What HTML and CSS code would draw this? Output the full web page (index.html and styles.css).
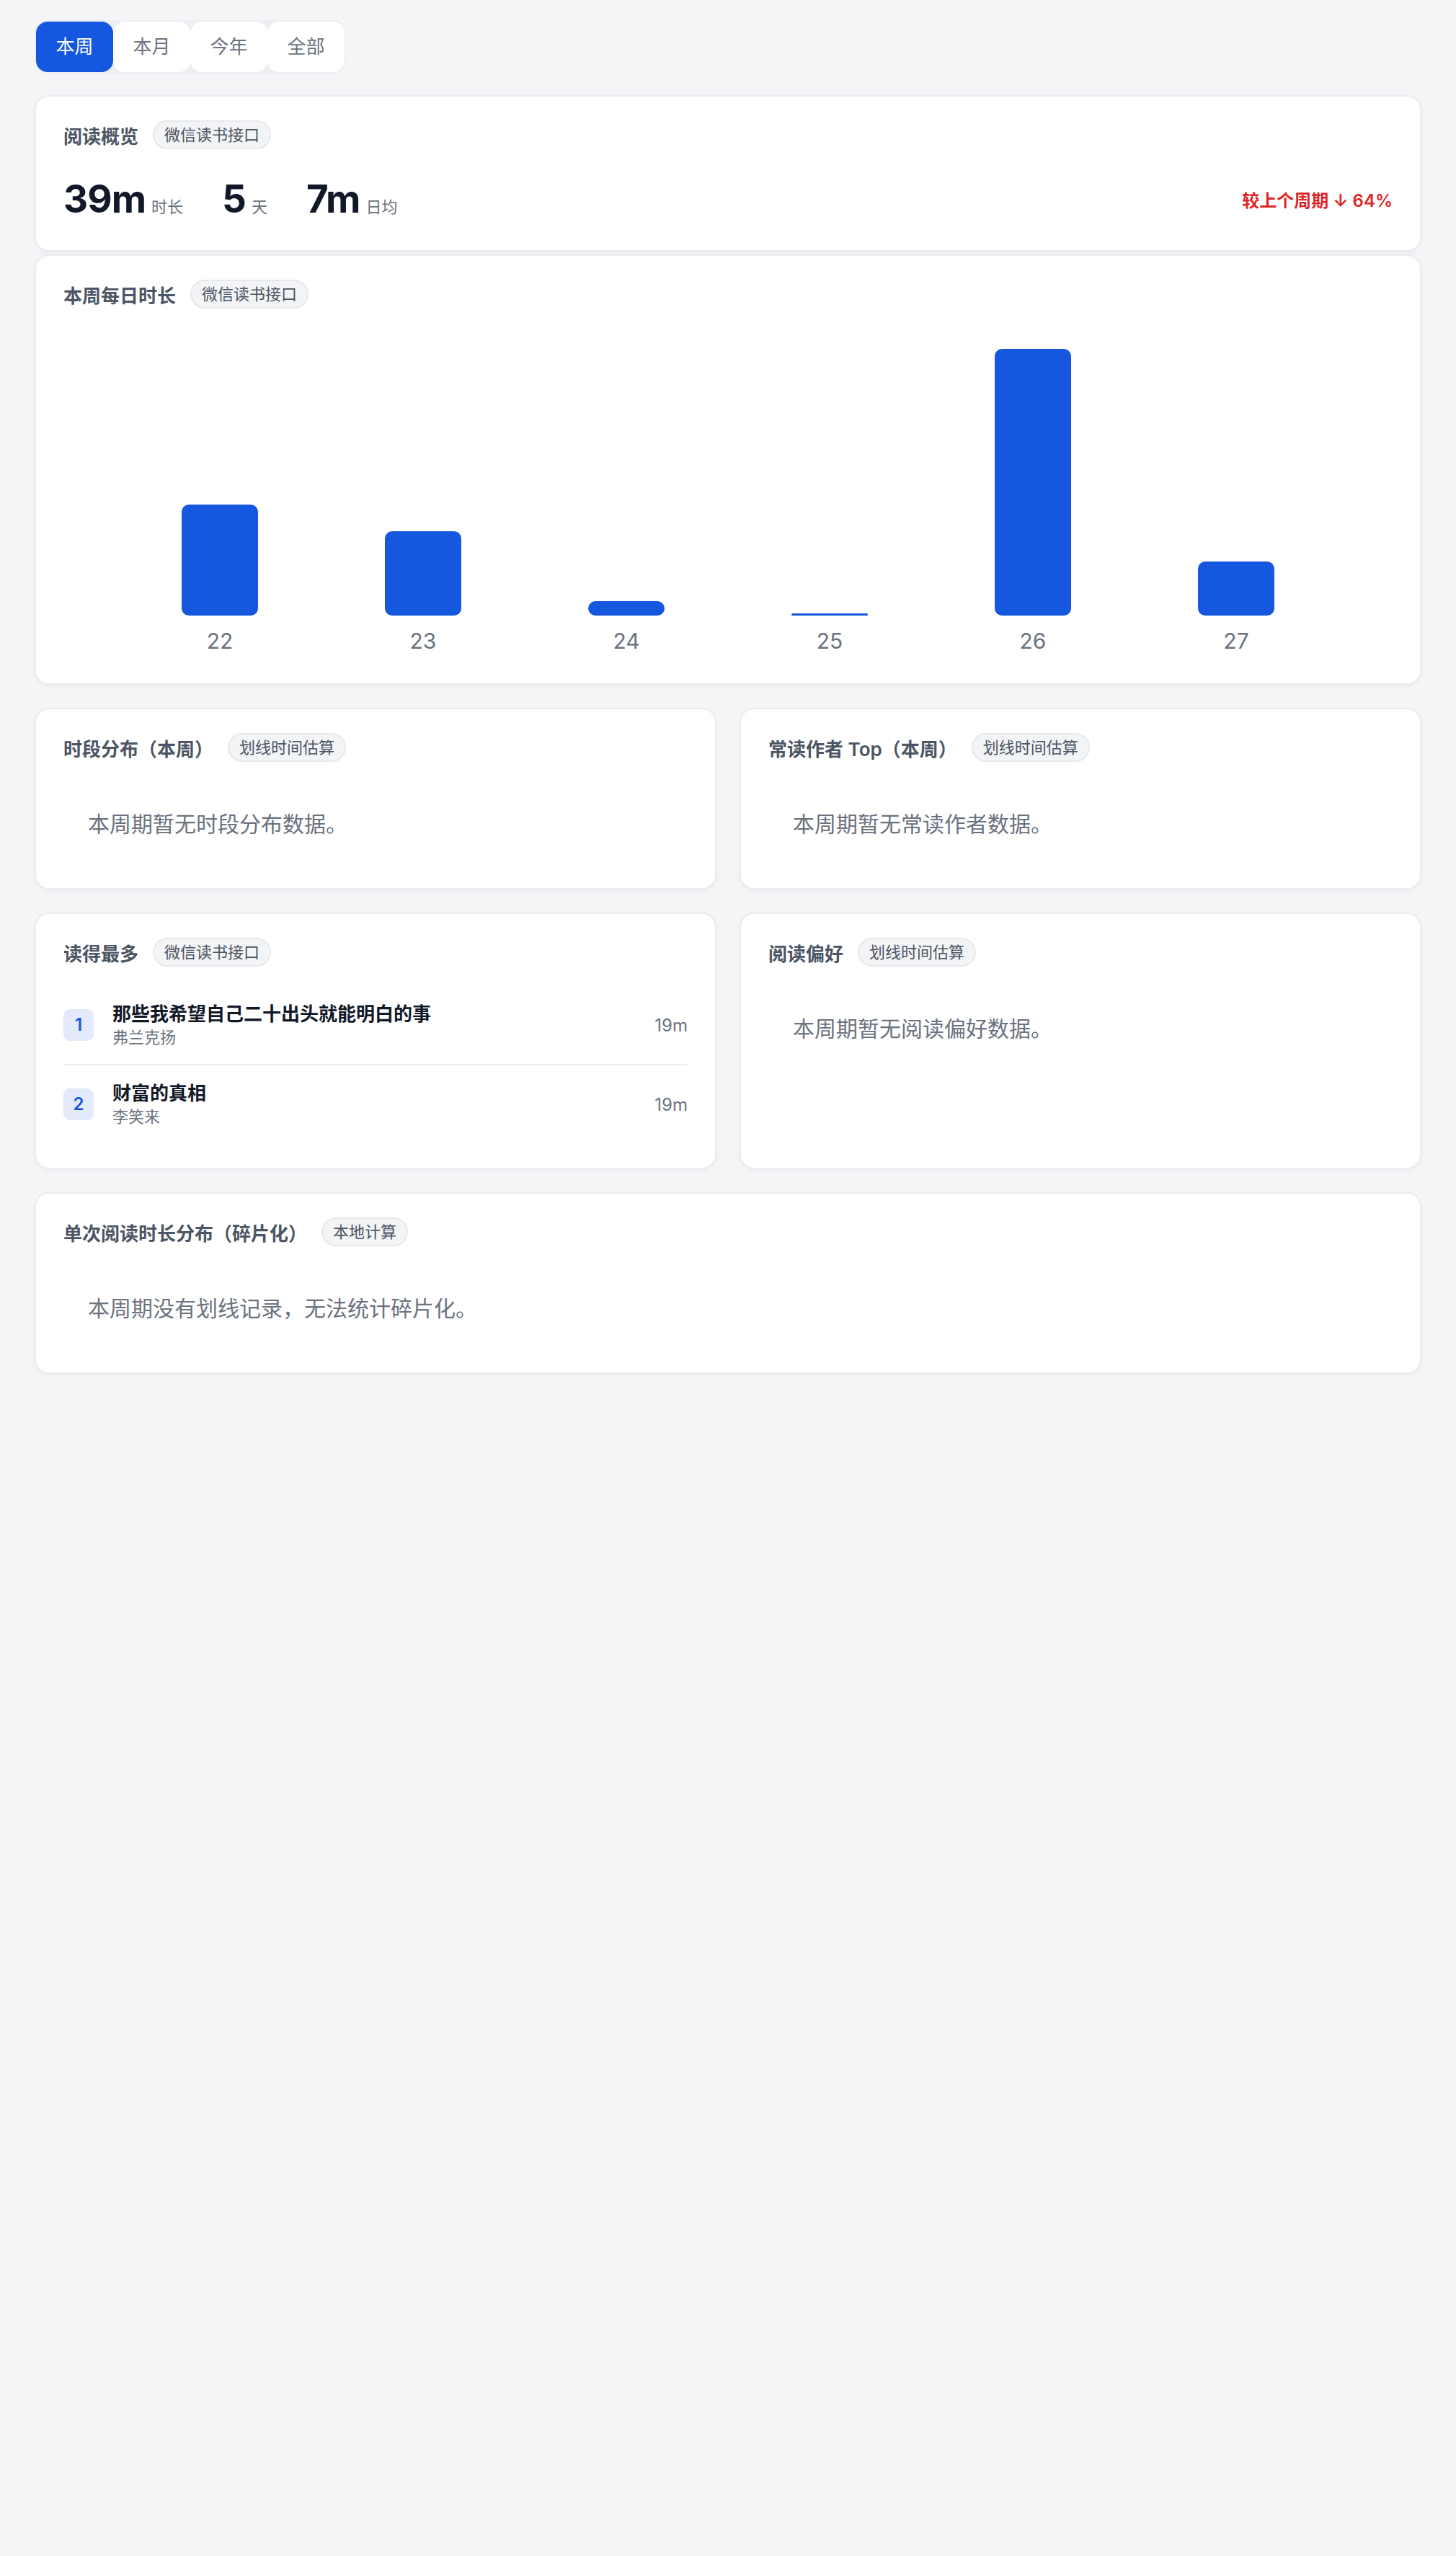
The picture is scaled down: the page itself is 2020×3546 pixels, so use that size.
FILE: index.html
```html
<!DOCTYPE html>
<html lang="zh-CN">
<head>
  <meta charset="UTF-8" />
  <meta name="viewport" content="width=device-width, initial-scale=1.0" />
  <title>阅读统计</title>
  <link rel="stylesheet" href="styles.css">
</head>
<body>

  <!-- Period Tabs -->
  <div class="tabs">
    <div class="tab active">本周</div>
    <div class="tab">本月</div>
    <div class="tab">今年</div>
    <div class="tab">全部</div>
  </div>

  <!-- Overview -->
  <div class="card overview">
    <div class="card-head">
      <span class="card-title">阅读概览</span>
      <span class="badge">微信读书接口</span>
    </div>
    <div class="stats-row">
      <div class="stats">
        <div class="stat"><span class="stat-num">39m</span><span class="stat-unit">时长</span></div>
        <div class="stat"><span class="stat-num">5</span><span class="stat-unit">天</span></div>
        <div class="stat"><span class="stat-num">7m</span><span class="stat-unit">日均</span></div>
      </div>
      <div class="compare down">较上个周期 ↓ 64%</div>
    </div>
  </div>

  <!-- Daily chart -->
  <div class="card">
    <div class="card-head">
      <span class="card-title">本周每日时长</span>
      <span class="badge">微信读书接口</span>
    </div>
    <div class="chart">
      <div class="col"><div class="bar-wrap"><div class="bar" style="height:154px"></div></div><div class="day">22</div></div>
      <div class="col"><div class="bar-wrap"><div class="bar" style="height:117px"></div></div><div class="day">23</div></div>
      <div class="col"><div class="bar-wrap"><div class="bar" style="height:20px"></div></div><div class="day">24</div></div>
      <div class="col"><div class="bar-wrap"><div class="bar" style="height:3px"></div></div><div class="day">25</div></div>
      <div class="col"><div class="bar-wrap"><div class="bar" style="height:370px"></div></div><div class="day">26</div></div>
      <div class="col"><div class="bar-wrap"><div class="bar" style="height:75px"></div></div><div class="day">27</div></div>
    </div>
  </div>

  <div class="grid">
    <div class="card">
      <div class="card-head">
        <span class="card-title">时段分布（本周）</span>
        <span class="badge">划线时间估算</span>
      </div>
      <p class="empty">本周期暂无时段分布数据。</p>
    </div>

    <div class="card">
      <div class="card-head">
        <span class="card-title">常读作者 Top（本周）</span>
        <span class="badge">划线时间估算</span>
      </div>
      <p class="empty">本周期暂无常读作者数据。</p>
    </div>
  </div>

  <div class="grid">
    <div class="card">
      <div class="card-head">
        <span class="card-title">读得最多</span>
        <span class="badge">微信读书接口</span>
      </div>
      <div class="book-list">
        <div class="book">
          <span class="rank">1</span>
          <div class="book-info">
            <div class="book-title">那些我希望自己二十出头就能明白的事</div>
            <div class="book-author">弗兰克扬</div>
          </div>
          <span class="book-time">19m</span>
        </div>
        <div class="book">
          <span class="rank">2</span>
          <div class="book-info">
            <div class="book-title">财富的真相</div>
            <div class="book-author">李笑来</div>
          </div>
          <span class="book-time">19m</span>
        </div>
      </div>
    </div>

    <div class="card">
      <div class="card-head">
        <span class="card-title">阅读偏好</span>
        <span class="badge">划线时间估算</span>
      </div>
      <p class="empty">本周期暂无阅读偏好数据。</p>
    </div>
  </div>

  <div class="card">
    <div class="card-head">
      <span class="card-title">单次阅读时长分布（碎片化）</span>
      <span class="badge">本地计算</span>
    </div>
    <p class="empty">本周期没有划线记录，无法统计碎片化。</p>
  </div>

</body>
</html>
```

FILE: styles.css
```css
body {
  margin: 0;
  padding: 28px 48px 60px;
  background-color: #f4f5f7;
  font-family: Inter, "Noto Sans CJK SC", sans-serif;
  color: #111827;
}

/* tabs */
.tabs {
  display: inline-flex;
  padding: 2px;
  background: #eceef1;
  border-radius: 18px;
}

.tab {
  width: 107px;
  height: 70px;
  line-height: 70px;
  text-align: center;
  font-size: 26px;
  color: #6b7280;
  background: #fff;
  border-radius: 16px;
}

.tab.active {
  background: #1657e0;
  color: #fff;
}

/* cards */
.card {
  background: #fff;
  border: 2px solid #eaebef;
  border-radius: 20px;
  box-shadow: 0 2px 6px rgba(16, 24, 40, 0.04);
  padding: 33px 38px;
  margin-top: 32px;
}

.overview {
  margin-top: 30px;
}

.overview + .card {
  margin-top: 4px;
}

.card-head {
  display: flex;
  align-items: center;
  gap: 20px;
  height: 40px;
}

.card-title {
  font-size: 26px;
  font-weight: 600;
  color: #4b5563;
}

.badge {
  font-size: 22px;
  line-height: 36px;
  padding: 0 14px;
  color: #4b5563;
  background: #f3f4f6;
  border: 2px solid #e7e8ec;
  border-radius: 999px;
}

/* overview stats */
.stats-row {
  display: flex;
  align-items: center;
  justify-content: space-between;
  margin-top: 43px;
  margin-bottom: 12px;
}

.stats {
  display: flex;
  align-items: baseline;
  gap: 54px;
}

.stat {
  display: flex;
  align-items: baseline;
}

.stat-num {
  font-size: 53px;
  line-height: 52px;
  font-weight: 700;
  letter-spacing: -1px;
  color: #111827;
}

.stat-unit {
  font-size: 22px;
  color: #6b7280;
  margin-left: 8px;
}

.compare {
  font-size: 24px;
  font-weight: 600;
}

.compare.down {
  color: #dc2626;
}

/* chart */
.chart {
  display: grid;
  grid-template-columns: repeat(6, 1fr);
  padding: 0 76px;
}

.col {
  display: flex;
  flex-direction: column;
  align-items: center;
}

.bar-wrap {
  height: 426px;
  display: flex;
  align-items: flex-end;
}

.bar {
  width: 106px;
  background: #1657e0;
  border-radius: 10px;
}

.day {
  font-size: 30px;
  line-height: 42px;
  color: #6b7280;
  margin-top: 14px;
  margin-bottom: 5px;
}

/* two column rows */
.grid {
  display: grid;
  grid-template-columns: 1fr 1fr;
  gap: 32px;
  margin-top: 32px;
}

.grid .card {
  margin-top: 0;
}

.empty {
  margin: 28px 0 0;
  padding: 36px 34px 33px;
  font-size: 30px;
  line-height: 45px;
  color: #6b7280;
}

/* most read list */
.book-list {
  margin-top: 27px;
}

.book {
  display: flex;
  align-items: center;
  gap: 26px;
  padding: 21px 0;
}

.book + .book {
  border-top: 2px solid #eceef1;
  padding-bottom: 22px;
}

.rank {
  width: 42px;
  height: 44px;
  line-height: 44px;
  text-align: center;
  font-size: 24px;
  font-weight: 600;
  color: #1a56db;
  background: #e3eafc;
  border-radius: 9px;
}

.book-info {
  flex: 1;
}

.book-title {
  font-size: 26px;
  line-height: 35px;
  font-weight: 600;
  color: #111827;
}

.book-author {
  font-size: 22px;
  line-height: 31px;
  color: #6b7280;
}

.book-time {
  font-size: 24px;
  color: #6b7280;
}
```
